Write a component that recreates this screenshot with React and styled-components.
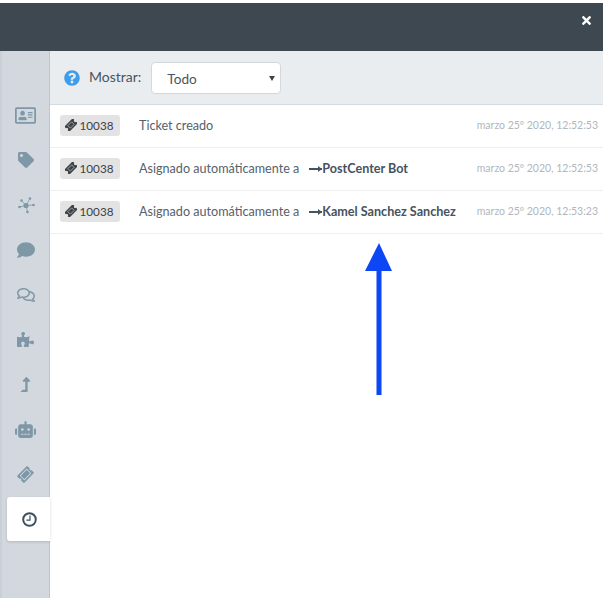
import React from 'react';
import styled, { createGlobalStyle } from 'styled-components';
import {
  FaRegAddressCard,
  FaTag,
  FaComment,
  FaRegComments,
  FaPuzzlePiece,
  FaLevelUpAlt,
  FaRobot,
  FaTicketAlt,
  FaTimes,
  FaQuestionCircle,
} from 'react-icons/fa';

const GlobalStyle = createGlobalStyle`
  html, body {
    margin: 0;
    padding: 0;
    background: #fff;
    font-family: Lato, "Liberation Sans", sans-serif;
  }
`;

const Screen = styled.div`
  position: relative;
  width: 603px;
  height: 598px;
  padding-top: 3px;
  box-sizing: border-box;
  display: flex;
  flex-direction: column;
  overflow: hidden;
`;

const Header = styled.header`
  height: 48px;
  flex: none;
  background: #3d4850;
  display: flex;
  align-items: center;
  justify-content: flex-end;
  padding: 0 10px 13px 0;
  box-sizing: border-box;
  color: #fff;
  font-size: 13px;
`;

const Body = styled.div`
  flex: 1;
  display: flex;
  min-height: 0;
`;

const Sidebar = styled.nav`
  width: 50px;
  flex: none;
  box-sizing: border-box;
  background: #d2d8de;
  border-left: 2px solid #c9d0d7;
  border-right: 1px solid #bcc5cc;
  display: flex;
  flex-direction: column;
  padding-top: 42px;
`;

const SideItem = styled.div`
  height: 44.9px;
  flex: none;
  display: flex;
  align-items: center;
  justify-content: center;
  color: #7f98a8;
  font-size: ${(p) => p.$size || 18}px;
`;

const TiltedTicket = styled(FaTicketAlt)`
  transform: rotate(-45deg);
`;

const ActiveItem = styled.div`
  height: 44px;
  flex: none;
  margin: 0 -1px 0 5px;
  padding-left: 2px;
  background: #fff;
  border-radius: 3px 0 0 3px;
  box-shadow: 0 1px 3px rgba(0, 0, 0, 0.15);
  display: flex;
  align-items: center;
  justify-content: center;
  color: #3d4f5f;
  position: relative;
`;

const Main = styled.main`
  flex: 1;
  min-width: 0;
  display: flex;
  flex-direction: column;
`;

const Toolbar = styled.div`
  height: 54px;
  flex: none;
  box-sizing: border-box;
  background: #e9edf0;
  border-bottom: 1px solid #d3dae0;
  display: flex;
  align-items: center;
  padding: 0 0 0 14px;
  color: #4a5560;
  font-size: 14px;
`;

const HelpIcon = styled(FaQuestionCircle)`
  color: #3f9ce8;
  font-size: 16px;
  margin-right: 9px;
`;

const ToolbarLabel = styled.span`
  margin-bottom: 3px;
`;

const SelectBox = styled.div`
  width: 130px;
  height: 32px;
  margin-left: 10px;
  box-sizing: border-box;
  background: #fff;
  border: 1px solid #d3d8dc;
  border-radius: 4px;
  display: flex;
  align-items: center;
  justify-content: space-between;
  padding: 2px 5px 0 15px;
  color: #4a5560;
  font-size: 13.6px;
`;

const Caret = styled.span`
  width: 0;
  height: 0;
  border-left: 3px solid transparent;
  border-right: 3px solid transparent;
  border-top: 5px solid #444;
`;

const Row = styled.div`
  height: 43px;
  flex: none;
  box-sizing: border-box;
  border-bottom: 1px solid #edf0f2;
  display: flex;
  align-items: center;
  padding: 0 5px 2px 10px;
  font-size: 12.6px;
  color: #56616b;
`;

const Badge = styled.span`
  width: 60px;
  height: 21px;
  flex: none;
  box-sizing: border-box;
  background: #e3e3e3;
  border-radius: 3px;
  display: flex;
  align-items: center;
  justify-content: center;
  gap: 3px;
  padding: 0 2px 1px 0;
  color: #3c4247;
  font-size: 11.7px;
  margin-right: 19px;
`;

const Message = styled.span`
  flex: 1;
  white-space: nowrap;
`;

const Target = styled.strong`
  font-weight: 700;
  color: #46525e;
  margin-left: 10px;
`;

const TargetArrow = styled.span`
  display: inline-block;
  width: 13px;
  height: 2px;
  background: #46525e;
  position: relative;
  vertical-align: 3px;

  &::after {
    content: '';
    position: absolute;
    right: 0;
    top: -2px;
    border-left: 4px solid #46525e;
    border-top: 3px solid transparent;
    border-bottom: 3px solid transparent;
  }
`;

const Time = styled.span`
  color: #b0b7bd;
  font-size: 10.5px;
  white-space: nowrap;
`;

const Arrow = styled.svg`
  position: absolute;
  left: 364px;
  top: 243px;
`;

const rows = [
  { text: 'Ticket creado', time: 'marzo 25º 2020, 12:52:53' },
  { text: 'Asignado automáticamente a', target: 'PostCenter Bot', time: 'marzo 25º 2020, 12:52:53' },
  { text: 'Asignado automáticamente a', target: 'Kamel Sanchez Sanchez', time: 'marzo 25º 2020, 12:53:23' },
];

const HubIcon = () => (
  <svg width="18" height="18" viewBox="0 0 18 18" fill="currentColor" stroke="currentColor">
    <g strokeWidth="0.8">
      <line x1="9" y1="9.5" x2="4.5" y2="4.5" />
      <line x1="9" y1="9.5" x2="13" y2="2.5" />
      <line x1="9" y1="9.5" x2="16.5" y2="9" />
      <line x1="9" y1="9.5" x2="10.5" y2="16" />
      <line x1="9" y1="9.5" x2="2.5" y2="11" />
    </g>
    <g stroke="none">
      <circle cx="9" cy="9.5" r="2.6" />
      <circle cx="4.5" cy="4.5" r="1.3" />
      <circle cx="13" cy="2.5" r="1.3" />
      <circle cx="16.5" cy="9" r="1.3" />
      <circle cx="10.5" cy="16" r="1.3" />
      <circle cx="2.5" cy="11" r="1.3" />
    </g>
  </svg>
);

const ClockIcon = () => (
  <svg width="15" height="15" viewBox="0 0 15 15" fill="none" stroke="currentColor">
    <circle cx="7.5" cy="7.5" r="6.3" strokeWidth="2" />
    <path d="M8 3.6V8.2H4.4" strokeWidth="1.2" />
  </svg>
);

const SolidTicket = () => (
  <svg width="12" height="12" viewBox="0 0 13 13" fill="currentColor">
    <g transform="rotate(-45 6.5 6.5)">
      <path d="M0 2.6H13V5.1A1.4 1.4 0 0 0 13 7.9V10.4H0V7.9A1.4 1.4 0 0 0 0 5.1Z" />
      <rect x="3.6" y="4.6" width="5.8" height="3.8" fill="none" stroke="#e3e3e3" strokeWidth="0.6" />
    </g>
  </svg>
);

const App = () => (
  <>
    <GlobalStyle />
    <Screen>
      <Header>
        <FaTimes />
      </Header>
      <Body>
        <Sidebar>
          <SideItem $size={21}><FaRegAddressCard /></SideItem>
          <SideItem $size={16}><FaTag /></SideItem>
          <SideItem><HubIcon /></SideItem>
          <SideItem><FaComment /></SideItem>
          <SideItem><FaRegComments /></SideItem>
          <SideItem $size={17}><FaPuzzlePiece /></SideItem>
          <SideItem $size={15}><FaLevelUpAlt /></SideItem>
          <SideItem $size={21}><FaRobot /></SideItem>
          <SideItem $size={15}><TiltedTicket /></SideItem>
          <ActiveItem><ClockIcon /></ActiveItem>
        </Sidebar>
        <Main>
          <Toolbar>
            <HelpIcon />
            <ToolbarLabel>Mostrar:</ToolbarLabel>
            <SelectBox>
              Todo
              <Caret />
            </SelectBox>
          </Toolbar>
          {rows.map((row, i) => (
            <Row key={i}>
              <Badge><SolidTicket />10038</Badge>
              <Message>
                {row.text}
                {row.target && <Target><TargetArrow />{row.target}</Target>}
              </Message>
              <Time>{row.time}</Time>
            </Row>
          ))}
        </Main>
      </Body>
      <Arrow width="30" height="152" viewBox="0 0 30 152">
        <polygon points="15,0 28,28 1,28" fill="#0d47f5" />
        <rect x="12.5" y="27" width="5" height="125" fill="#0d47f5" />
      </Arrow>
    </Screen>
  </>
);

export default App;
